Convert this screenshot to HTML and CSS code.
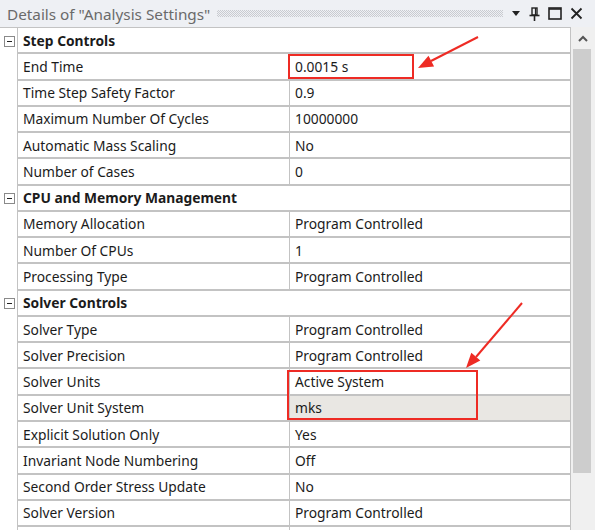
FILE: index.html
```html
<!DOCTYPE html>
<html lang="en">
<head>
    <meta charset="UTF-8">
    <title>Details of "Analysis Settings"</title>
    <link rel="stylesheet" href="styles.css">
</head>
<body>
    <div class="panel">
        <!-- Docked window caption -->
        <div class="titlebar">
            <span class="title">Details of "Analysis Settings"</span>
            <span class="grip"></span>
            <span class="tb-icons">
                <svg width="10" height="6" viewBox="0 0 10 6"><polygon points="1,0 9,0 5,5" fill="#222"/></svg>
                <svg width="11" height="14" viewBox="0 0 11 14"><rect x="3" y="1" width="5" height="7" fill="none" stroke="#222" stroke-width="1.4"/><line x1="0.5" y1="8.5" x2="10.5" y2="8.5" stroke="#222" stroke-width="1.6"/><line x1="5.5" y1="9" x2="5.5" y2="14" stroke="#222" stroke-width="1.6"/><line x1="6.5" y1="1" x2="6.5" y2="8" stroke="#222" stroke-width="1.2"/></svg>
                <svg width="14" height="13" viewBox="0 0 14 13"><rect x="1" y="1" width="12" height="11" fill="none" stroke="#222" stroke-width="1.6"/><line x1="1" y1="2" x2="13" y2="2" stroke="#222" stroke-width="1.6"/></svg>
                <svg width="13" height="13" viewBox="0 0 13 13"><path d="M1.5 1.5 L11.5 11.5 M11.5 1.5 L1.5 11.5" stroke="#222" stroke-width="1.8"/></svg>
            </span>
        </div>

        <div class="body">
            <div class="grid">
                <div class="row group"><span class="exp"><i></i></span><div class="cells"><span class="head">Step Controls</span></div></div>
                <div class="row"><span class="exp"></span><div class="cells"><span class="name">End Time</span><span class="value">0.0015 s</span></div></div>
                <div class="row"><span class="exp"></span><div class="cells"><span class="name">Time Step Safety Factor</span><span class="value">0.9</span></div></div>
                <div class="row"><span class="exp"></span><div class="cells"><span class="name">Maximum Number Of Cycles</span><span class="value">10000000</span></div></div>
                <div class="row"><span class="exp"></span><div class="cells"><span class="name">Automatic Mass Scaling</span><span class="value">No</span></div></div>
                <div class="row"><span class="exp"></span><div class="cells"><span class="name">Number of Cases</span><span class="value">0</span></div></div>

                <div class="row group"><span class="exp"><i></i></span><div class="cells"><span class="head">CPU and Memory Management</span></div></div>
                <div class="row"><span class="exp"></span><div class="cells"><span class="name">Memory Allocation</span><span class="value">Program Controlled</span></div></div>
                <div class="row"><span class="exp"></span><div class="cells"><span class="name">Number Of CPUs</span><span class="value">1</span></div></div>
                <div class="row"><span class="exp"></span><div class="cells"><span class="name">Processing Type</span><span class="value">Program Controlled</span></div></div>

                <div class="row group"><span class="exp"><i></i></span><div class="cells"><span class="head">Solver Controls</span></div></div>
                <div class="row"><span class="exp"></span><div class="cells"><span class="name">Solver Type</span><span class="value">Program Controlled</span></div></div>
                <div class="row"><span class="exp"></span><div class="cells"><span class="name">Solver Precision</span><span class="value">Program Controlled</span></div></div>
                <div class="row"><span class="exp"></span><div class="cells"><span class="name">Solver Units</span><span class="value">Active System</span></div></div>
                <div class="row"><span class="exp"></span><div class="cells"><span class="name">Solver Unit System</span><span class="value readonly">mks</span></div></div>
                <div class="row"><span class="exp"></span><div class="cells"><span class="name">Explicit Solution Only</span><span class="value">Yes</span></div></div>
                <div class="row"><span class="exp"></span><div class="cells"><span class="name">Invariant Node Numbering</span><span class="value">Off</span></div></div>
                <div class="row"><span class="exp"></span><div class="cells"><span class="name">Second Order Stress Update</span><span class="value">No</span></div></div>
                <div class="row"><span class="exp"></span><div class="cells"><span class="name">Solver Version</span><span class="value">Program Controlled</span></div></div>
                <div class="row"><span class="exp"></span><div class="cells"><span class="name"></span><span class="value"></span></div></div>
            </div>

            <div class="scrollbar">
                <div class="sb-btn">
                    <svg width="10" height="7" viewBox="0 0 10 7"><path d="M1 6 L5 2 L9 6" fill="none" stroke="#555" stroke-width="2"/></svg>
                </div>
                <div class="sb-thumb"></div>
            </div>
        </div>

        <!-- Red callouts drawn over the grid -->
        <svg class="marks" width="595" height="530" viewBox="0 0 595 530">
            <rect x="289" y="55" width="124" height="23" fill="none" stroke="#ee2b24" stroke-width="2"/>
            <rect x="288" y="371" width="189" height="48" fill="none" stroke="#ee2b24" stroke-width="2"/>
            <line x1="478" y1="37" x2="431" y2="61" stroke="#ee2b24" stroke-width="2"/>
            <polygon points="418,68 434.1,66.4 428.5,55.8" fill="#ee2b24"/>
            <line x1="522" y1="303" x2="476" y2="357" stroke="#ee2b24" stroke-width="2"/>
            <polygon points="466,368 480.3,360.5 471.3,352.7" fill="#ee2b24"/>
        </svg>
    </div>
</body>
</html>
```

FILE: styles.css
```css
body {
    margin: 0;
    font-family: "Noto Sans", "Open Sans", sans-serif;
    background: #ffffff;
}
.panel {
    position: relative;
    width: 595px;
    height: 530px;
    overflow: hidden;
    background: #ffffff;
}
.titlebar {
    height: 27px;
    display: flex;
    align-items: center;
    background: #eef0f4;
    padding-left: 7px;
    box-sizing: border-box;
}
.title {
    font-size: 15.3px;
    color: #6a6a6a;
    white-space: nowrap;
}
.grip {
    flex: 1;
    height: 7px;
    margin: 0 8px 0 7px;
    background: repeating-conic-gradient(#c9cbd0 0 25%, transparent 0 50%) 0 0 / 2px 2px;
}
.tb-icons {
    display: flex;
    align-items: center;
    gap: 8px;
    padding-right: 12px;
}
.body {
    display: flex;
    height: 503px;
    overflow: hidden;
}
.grid {
    width: 571px;
    border-top: 1px solid #c3c3c3;
    box-sizing: border-box;
}
.row {
    display: flex;
    height: 26.28px;
}
.exp {
    width: 17px;
    flex: none;
    display: flex;
    align-items: center;
    justify-content: center;
}
.exp i {
    width: 9px;
    height: 9px;
    border: 1px solid #8a8a8a;
    margin-left: 1px;
    position: relative;
    background: #fff;
}
.exp i::after {
    content: "";
    position: absolute;
    left: 2px;
    right: 2px;
    top: 4px;
    height: 1px;
    background: #222;
}
.cells {
    flex: 1;
    display: flex;
    border-left: 1px solid #c3c3c3;
    border-right: 1px solid #c3c3c3;
    border-bottom: 2px solid #c3c3c3;
    font-size: 13.8px;
    color: #1b1b1b;
    min-width: 0;
}
.head {
    display: flex;
    align-items: center;
    padding-left: 5px;
    font-weight: bold;
}
.name {
    width: 272px;
    flex: none;
    display: flex;
    align-items: center;
    padding-left: 5px;
    box-sizing: border-box;
    border-right: 1px solid #c3c3c3;
    white-space: nowrap;
}
.value {
    flex: 1;
    display: flex;
    align-items: center;
    padding-left: 5px;
    white-space: nowrap;
}
.value.readonly {
    background: #e9e7e3;
}
.scrollbar {
    flex: 1;
    display: flex;
    flex-direction: column;
    background: #f0f0f0;
}
.sb-btn {
    height: 22px;
    display: flex;
    align-items: center;
    justify-content: center;
}
.sb-thumb {
    height: 424px;
    margin: 0 4px 0 2px;
    background: #cdcdcd;
}
.marks {
    position: absolute;
    top: 0;
    left: 0;
    pointer-events: none;
}
```
